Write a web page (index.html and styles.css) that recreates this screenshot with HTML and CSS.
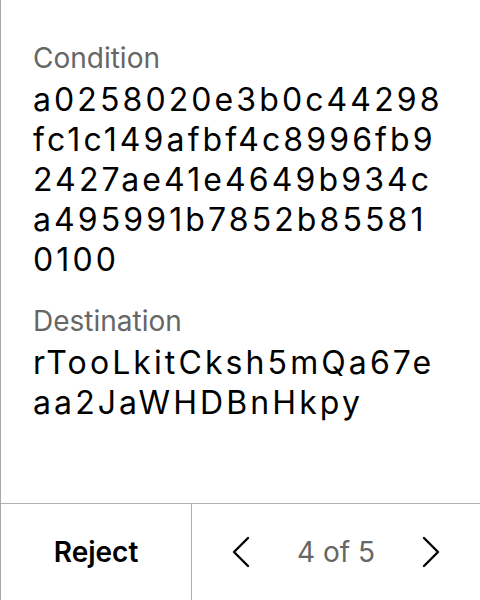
FILE: index.html
```html
<!DOCTYPE html>
<html>
<head>
<meta charset="utf-8">
<link rel="stylesheet" href="styles.css">
</head>
<body>
<div class="panel">
  <div class="content">
    <div class="field">
      <div class="label">Condition</div>
      <div class="value">a0258020e3b0c44298fc1c149afbf4c8996fb92427ae41e4649b934ca495991b7852b855810100</div>
    </div>
    <div class="field">
      <div class="label">Destination</div>
      <div class="value">rTooLkitCksh5mQa67eaa2JaWHDBnHkpy</div>
    </div>
  </div>
  <div class="footer">
    <div class="reject">Reject</div>
    <div class="nav">
      <span class="chev"><svg width="20" height="32" viewBox="0 0 20 32"><path d="M17 2 L3 16 L17 30" fill="none" stroke="#000" stroke-width="2.4" stroke-linecap="round" stroke-linejoin="round"/></svg></span>
      <span class="count">4 of 5</span>
      <span class="chev"><svg width="20" height="32" viewBox="0 0 20 32"><path d="M3 2 L17 16 L3 30" fill="none" stroke="#000" stroke-width="2.4" stroke-linecap="round" stroke-linejoin="round"/></svg></span>
    </div>
  </div>
</div>
</body>
</html>
```
FILE: styles.css
```css
html, body {
  margin: 0;
  padding: 0;
  background: #fff;
}
body {
  font-family: Inter, "Noto Sans", sans-serif;
  color: #000;
}
.panel {
  height: 600px;
  box-sizing: border-box;
  border-left: 1px solid #a8a8a8;
  display: flex;
  flex-direction: column;
}
.content {
  flex: 1;
  padding: 41px 32px 0 32px;
  display: flex;
  flex-direction: column;
  gap: 24px;
}
.label {
  font-size: 28px;
  line-height: 34px;
  color: #666;
  margin-bottom: 5px;
}
.value {
  font-size: 32px;
  line-height: 40px;
  letter-spacing: 3.1px;
  word-break: break-all;
}
.footer {
  height: 96px;
  border-top: 1px solid #b0b0b0;
  display: grid;
  grid-template-columns: 191px 1fr;
}
.reject {
  border-right: 1px solid #b0b0b0;
  display: flex;
  align-items: center;
  justify-content: center;
  font-size: 28px;
  font-weight: 600;
}
.nav {
  display: flex;
  align-items: center;
  justify-content: space-between;
  padding: 0 39px 0 39px;
}
.chev {
  display: flex;
}
.count {
  font-size: 28px;
  color: #666;
}
```
